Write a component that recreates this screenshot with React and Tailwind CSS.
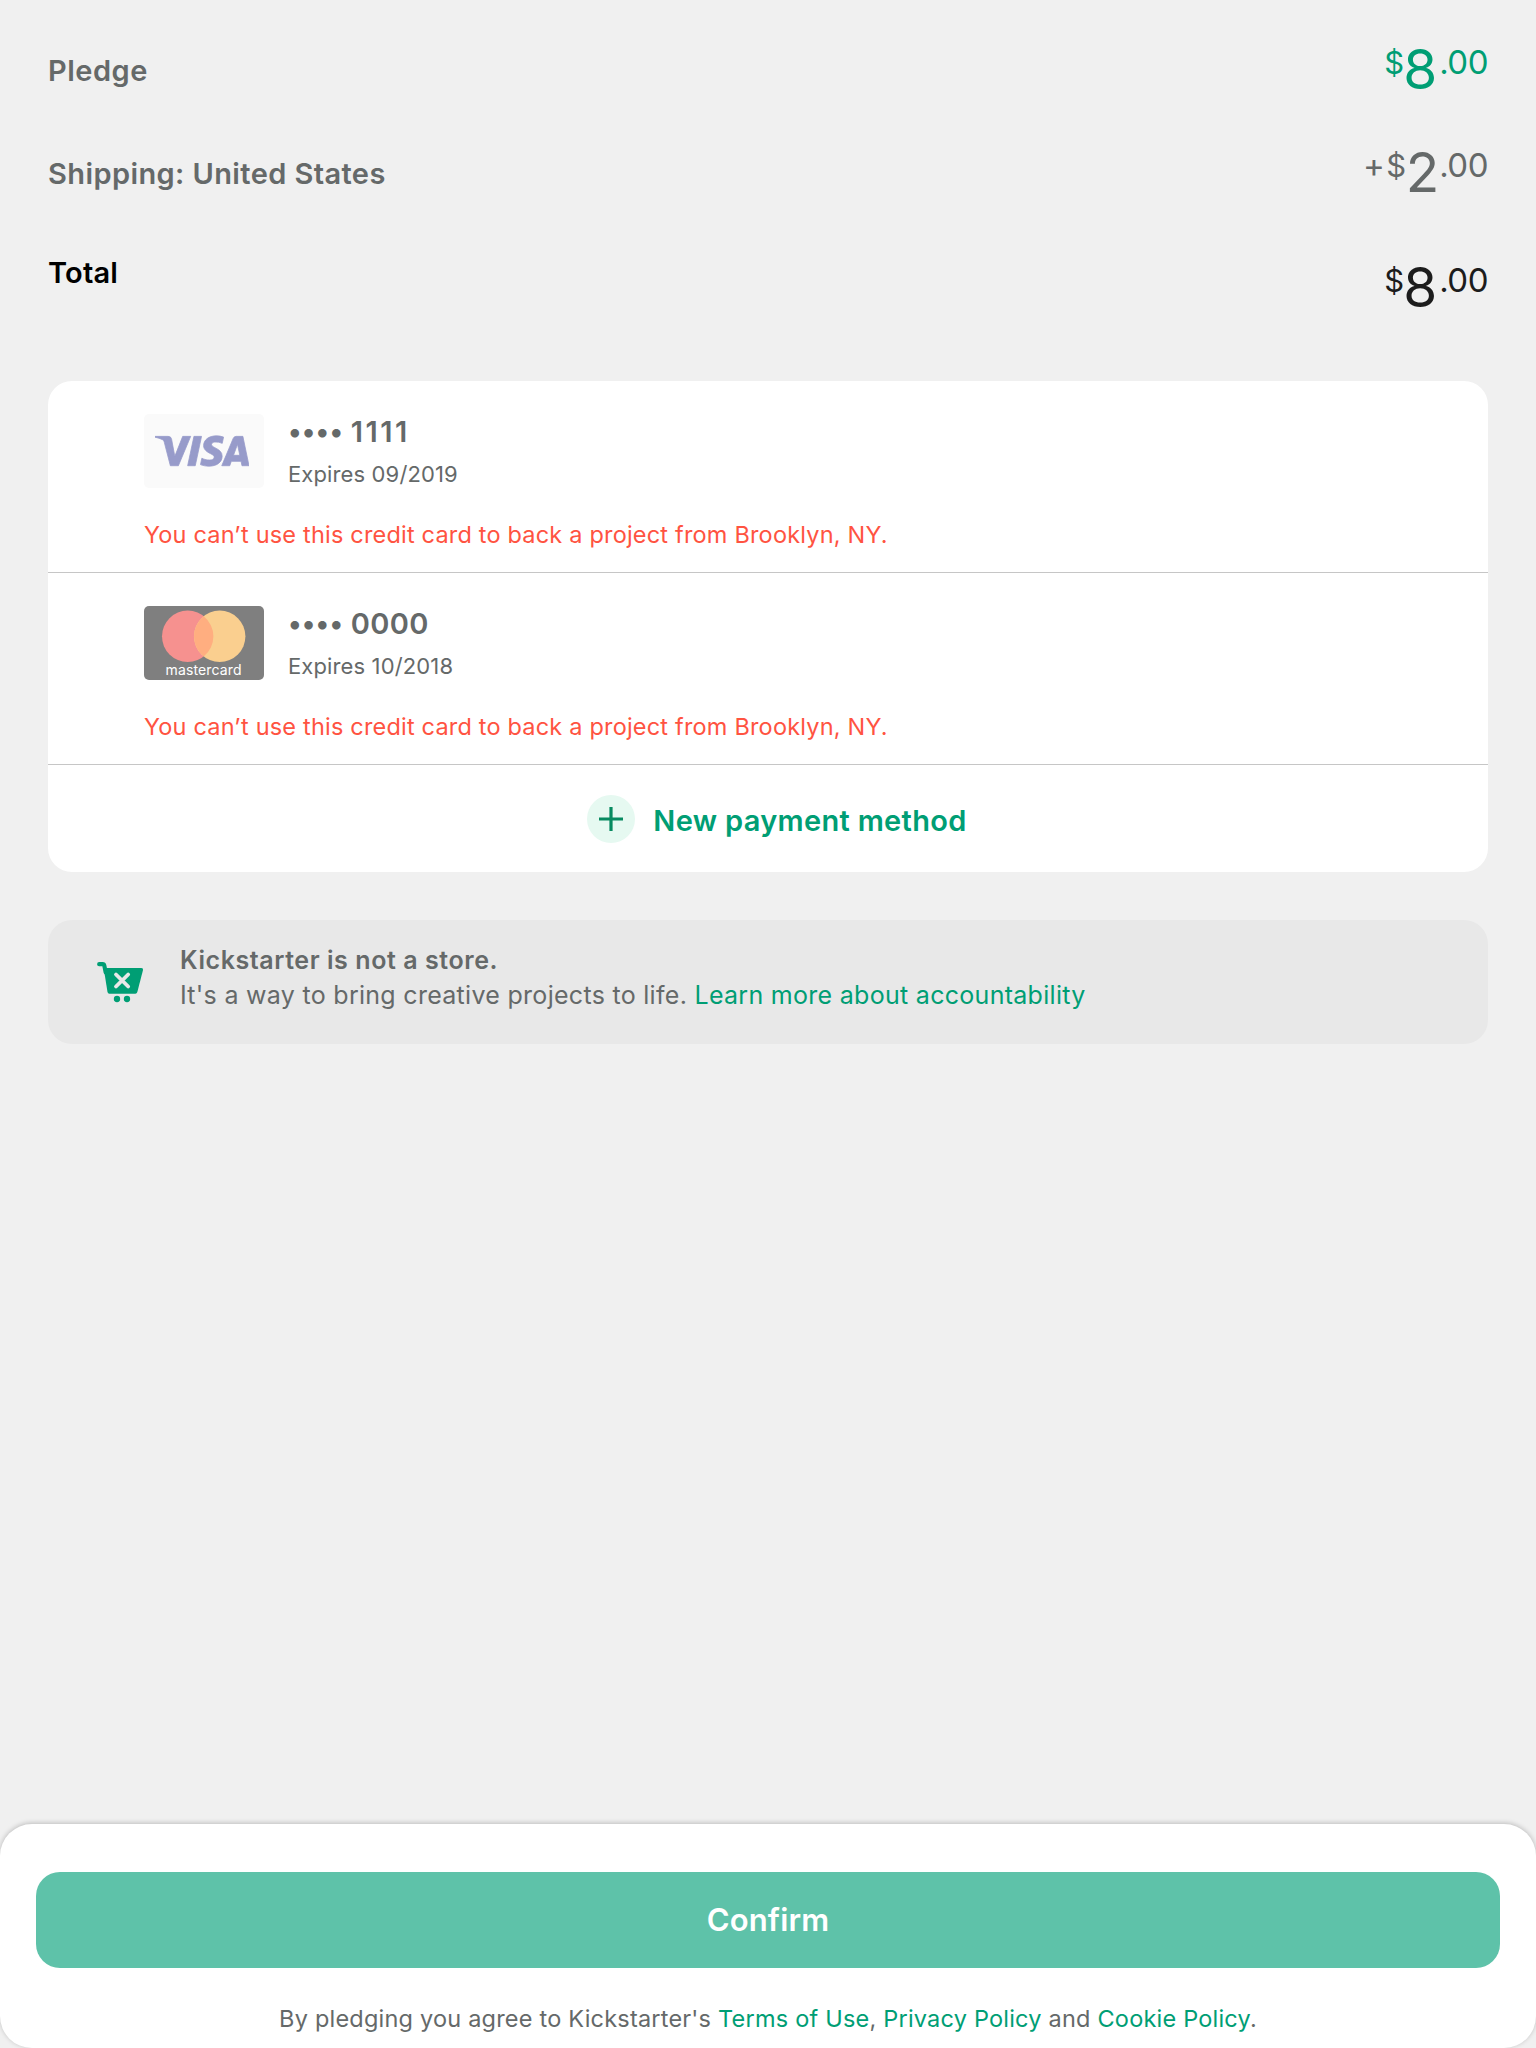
import { SiVisa } from "react-icons/si";

function Amount({ sign, symbol = "$", whole, cents, className, gap }) {
  return (
    <div className={`flex items-start whitespace-nowrap ${className}`}>
      {sign && (
        <span className="mt-[18px] mr-[1.5px] text-[33px] leading-10">{sign}</span>
      )}
      <span className="mt-[19px] text-[31px] leading-10">{symbol}</span>
      <span className={`mt-[15px] text-[55px] leading-[60px] ${gap}`}>{whole}</span>
      <span className="mt-[18px] text-[33px] leading-10 tracking-[-0.5px]">{cents}</span>
    </div>
  );
}

function VisaCard() {
  return (
    <div className="flex h-[74px] w-[120px] shrink-0 items-center justify-center rounded-[5px] bg-[#fafafa] pr-[5px]">
      <SiVisa className="h-[94px] w-[94px] stroke-[#979bca] stroke-[0.2] text-[#979bca]" />
    </div>
  );
}

function MasterCard() {
  return (
    <svg className="h-[74px] w-[120px] shrink-0" viewBox="0 0 120 74">
      <rect width="120" height="74" rx="5" fill="#7f7f7f" />
      <circle cx="43.7" cy="30.3" r="25.7" fill="#f6918f" />
      <circle cx="75.7" cy="30.3" r="25.7" fill="#facf8f" />
      <path d="M59.7 10.2a25.7 25.7 0 0 1 0 40.2a25.7 25.7 0 0 1 0-40.2z" fill="#ffae80" />
      <text x="21.500" y="69.3" textLength="76" className="font-['Inter'] text-[14px]" fill="#ffffff">
        mastercard
      </text>
    </svg>
  );
}

function CartIcon() {
  return (
    <svg className="h-14 w-[60px] shrink-0" viewBox="0 0 180 168" fill="none">
      <path d="M27.5 30.5H38q4 0 5 4.500L47 55" stroke="#009e74" strokeWidth="12.5" strokeLinecap="round" strokeLinejoin="round" />
      <path d="M41 42H154q6.500 0 5 6L142 114q-1.500 5-6 5H58q-4.500 0-5.500-5z" fill="#009e74" />
      <path d="M78 61.500L114.500 97.500M114.500 61.500L78 97.500" stroke="#e8e8e8" strokeWidth="11.500" strokeLinecap="round" />
      <circle cx="81" cy="135" r="9.500" fill="#009e74" />
      <circle cx="111" cy="135" r="9.500" fill="#009e74" />
    </svg>
  );
}

function PaymentRow({ logo, digits, digitsClass, expires }) {
  return (
    <div className="flex h-[192px] flex-col border-b border-[#c6c6c6] pl-24">
      <div className="flex h-[138px] gap-6 pt-[33px]">
        {logo}
        <div className="-mt-[2px] flex flex-col">
          <div className="flex h-[46px] text-[29px] leading-10 font-semibold">
            <span className="mr-[7.5px] text-[27px] tracking-[0.2px]">••••</span>
            <span className={digitsClass}>{digits}</span>
          </div>
          <div className="text-[22px] leading-8 tracking-[0.13px]">{expires}</div>
        </div>
      </div>
      <p className="text-[23.5px] leading-8 tracking-[0.19px] text-[#ff5341]">
        You can’t use this credit card to back a project from Brooklyn, NY.
      </p>
    </div>
  );
}

export default function App() {
  return (
    <div className="flex h-[2048px] w-[1536px] flex-col overflow-hidden bg-[#f0f0f0] font-['Inter',sans-serif] text-[#656969]">
      <section className="flex h-[381px] flex-col px-12 pt-6">
        <div className="flex h-[103px] items-start justify-between">
          <span className="mt-[27px] text-[29px] leading-10 font-semibold tracking-[0.5px]">Pledge</span>
          <Amount whole="8" cents=".00" className="text-[#009e74]" gap="-ml-px mr-[2px]" />
        </div>
        <div className="flex h-[103px] items-start justify-between">
          <span className="mt-[27px] text-[29px] leading-10 font-semibold tracking-[0.4px]">
            Shipping: United States
          </span>
          <Amount sign="+" whole="2" cents=".00" className="text-[#656969]" gap="-ml-[0.5px]" />
        </div>
        <div className="flex items-start justify-between">
          <span className="mt-[23px] text-[29px] leading-10 font-semibold tracking-[0.2px] text-black">Total</span>
          <Amount whole="8" cents=".00" className="pt-3 text-[#1c1c1c]" gap="-ml-px mr-[2px]" />
        </div>
      </section>

      <section className="mx-12 h-[491px] shrink-0 overflow-hidden rounded-3xl bg-white">
        <PaymentRow
          logo={<VisaCard />}
          digits="1111"
          digitsClass="tracking-[2.5px]"
          expires="Expires 09/2019"
        />
        <PaymentRow
          logo={<MasterCard />}
          digits="0000"
          digitsClass="tracking-[0.4px]"
          expires="Expires 10/2018"
        />
        <button className="flex h-[107px] w-full items-center justify-center gap-[18px] pt-px pl-[18px] text-[#009e74]">
          <svg className="h-12 w-12" viewBox="0 0 48 48">
            <circle cx="24" cy="24" r="24" fill="#e6f9f1" />
            <path d="M12 24H36M24 12V36" stroke="#078a60" strokeWidth="3.2" />
          </svg>
          <span className="pt-[3px] text-[29px] leading-10 font-semibold tracking-[0.32px]">New payment method</span>
        </button>
      </section>

      <section className="mx-12 mt-12 flex h-[124px] shrink-0 rounded-3xl bg-[#e8e8e8] pl-[42px]">
        <div className="pt-[34px] pr-[30px]">
          <CartIcon />
        </div>
        <div className="pt-[23px] text-[25px] leading-[35px]">
          <p className="font-semibold tracking-[0.57px]">Kickstarter is not a store.</p>
          <p className="tracking-[0.29px]">
            It's a way to bring creative projects to life.{" "}
            <a className="tracking-[0.29px] text-[#009e74]">Learn more about accountability</a>
          </p>
        </div>
      </section>

      <footer className="mt-auto h-[224px] shrink-0 rounded-4xl bg-white px-9 pt-12 shadow-[0_-1px_5px_rgba(0,0,0,0.22)]">
        <button className="h-24 w-full rounded-3xl bg-[#5ec2a9] text-[31px] leading-[96px] font-semibold tracking-[0.15px] text-white">
          Confirm
        </button>
        <p className="mt-[35px] text-center text-[23.5px] leading-8 tracking-[0.21px] whitespace-nowrap">
          By pledging you agree to Kickstarter's <a className="text-[#009e74]">Terms of Use</a>,{" "}
          <a className="text-[#009e74]">Privacy Policy</a> and <a className="text-[#009e74]">Cookie Policy</a>.
        </p>
      </footer>
    </div>
  );
}
